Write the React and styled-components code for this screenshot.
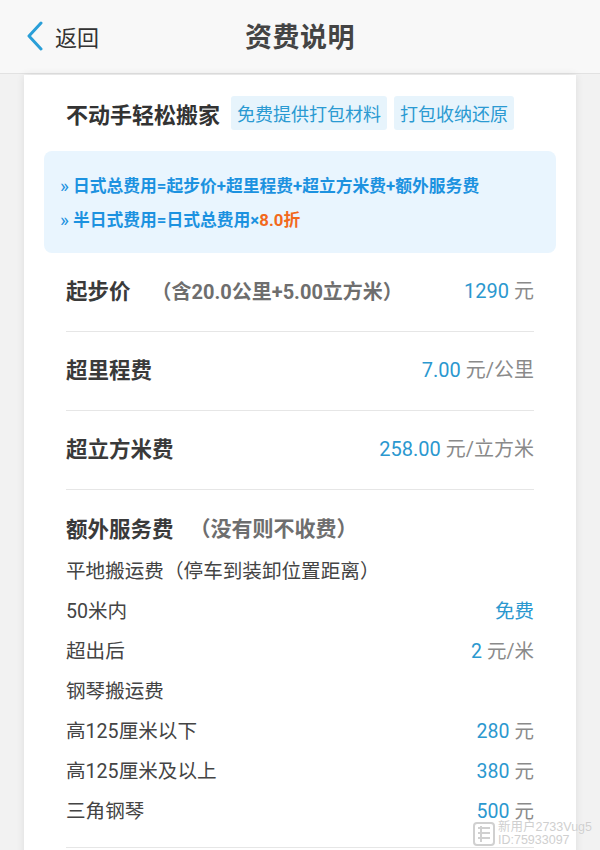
import React from "react";
import styled, { createGlobalStyle } from "styled-components";

const Global = createGlobalStyle`
  html, body { margin: 0; padding: 0; background: #f2f2f2; }
  body { font-family: Roboto, "Noto Sans CJK SC", sans-serif; overflow: hidden; }
  * { box-sizing: border-box; }
`;

const Page = styled.div`
  width: 600px;
  height: 850px;
  position: relative;
  overflow: hidden;
  background: #f2f2f2;
`;

const Header = styled.header`
  height: 74px;
  background: #f8f8f8;
  border-bottom: 1px solid #e2e2e2;
  display: grid;
  grid-template-columns: 1fr auto 1fr;
  align-items: center;
  padding: 0 26px 2px 26px;
`;

const Back = styled.div`
  display: flex;
  align-items: center;
  gap: 11px;
  font-size: 22px;
  color: #333;
`;

const Title = styled.h1`
  margin: 0;
  font-size: 27px;
  font-weight: 700;
  color: #444;
  letter-spacing: 0.5px;
`;

const Card = styled.main`
  margin: 1px 24px 0;
  background: #fff;
  box-shadow: 0 0 8px rgba(0, 0, 0, 0.09);
  padding: 21px 20px 0;
  min-height: 800px;
`;

const TagRow = styled.div`
  display: flex;
  align-items: center;
  padding-left: 22px;
  gap: 7px;
`;

const Lead = styled.span`
  font-size: 22px;
  font-weight: 700;
  color: #333;
  margin-right: 4px;
`;

const Tag = styled.span`
  height: 34px;
  display: flex;
  align-items: center;
  padding: 0 6px;
  background: #e7f4fc;
  border-radius: 3px;
  color: #2b9ad2;
  font-size: 18px;
`;

const Info = styled.div`
  margin-top: 21px;
  background: #e9f5fe;
  border-radius: 8px;
  padding: 17px 16px;
`;

const InfoLine = styled.div`
  height: 34px;
  display: flex;
  align-items: center;
  font-size: 16.8px;
  font-weight: 700;
  color: #1c92e0;
`;

const Arrow = styled.span`
  font-size: 19px;
  margin-right: 4px;
  font-weight: 400;
`;

const Orange = styled.span`
  color: #f2691c;
`;

const Rows = styled.div`
  padding: 0 22px;
`;

const FeeRow = styled.div`
  height: 79px;
  padding-bottom: 5px;
  display: flex;
  align-items: center;
  justify-content: space-between;
  border-bottom: 1px solid #e6e6e6;
`;

const FeeName = styled.span`
  font-size: 21.5px;
  font-weight: 700;
  color: #3a3a3a;
`;

const Note = styled.span`
  font-size: ${(p) => (p.$wide ? 21 : 20)}px;
  font-weight: 700;
  color: #6e6e6e;
  margin-left: ${(p) => (p.$wide ? 16 : 21)}px;
`;

const Value = styled.span`
  font-size: ${(p) => (p.$small ? 19.5 : 20)}px;
  color: #8a8a8a;
`;

const Num = styled.span`
  color: #2b98cf;
  margin-right: 5px;
`;

const Extra = styled.section`
  padding-top: 15px;
  padding-bottom: 18px;
  border-bottom: 1px solid #e6e6e6;
`;

const ExtraTitle = styled.div`
  height: 44px;
  display: flex;
  align-items: center;
`;

const Item = styled.div`
  height: 40px;
  display: flex;
  align-items: center;
  justify-content: space-between;
  font-size: 19.6px;
  color: #444;
`;

const Watermark = styled.div`
  position: absolute;
  right: 8px;
  bottom: 3px;
  display: flex;
  align-items: center;
  gap: 3px;
  color: #cfcfcf;
  text-shadow: 0 0 1px #fff;
`;

const WmText = styled.div`
  display: flex;
  flex-direction: column;
  font-size: 12.5px;
  line-height: 13px;
  font-family: "Liberation Sans", "Noto Sans CJK SC", sans-serif;
`;

const extras = [
  ["平地搬运费（停车到装卸位置距离）", null],
  ["50米内", <Num key="f" style={{ marginRight: 0 }}>免费</Num>],
  ["超出后", [<Num key="n">2</Num>, "元/米"]],
  ["钢琴搬运费", null],
  ["高125厘米以下", [<Num key="n">280</Num>, "元"]],
  ["高125厘米及以上", [<Num key="n">380</Num>, "元"]],
  ["三角钢琴", [<Num key="n">500</Num>, "元"]],
];

export default function App() {
  return (
    <Page>
      <Global />
      <Header>
        <Back>
          <svg width="18" height="30" viewBox="0 0 18 30">
            <path d="M15 2 L3 15 L15 28" fill="none" stroke="#2a9fd8" strokeWidth="3" strokeLinecap="round" strokeLinejoin="round" />
          </svg>
          返回
        </Back>
        <Title>资费说明</Title>
        <div />
      </Header>
      <Card>
        <TagRow>
          <Lead>不动手轻松搬家</Lead>
          <Tag>免费提供打包材料</Tag>
          <Tag>打包收纳还原</Tag>
        </TagRow>
        <Info>
          <InfoLine>
            <Arrow>»</Arrow>日式总费用=起步价+超里程费+超立方米费+额外服务费
          </InfoLine>
          <InfoLine>
            <Arrow>»</Arrow>半日式费用=日式总费用×<Orange>8.0折</Orange>
          </InfoLine>
        </Info>
        <Rows>
          <FeeRow>
            <span>
              <FeeName>起步价</FeeName>
              <Note>（含20.0公里+5.00立方米）</Note>
            </span>
            <Value><Num>1290</Num>元</Value>
          </FeeRow>
          <FeeRow>
            <FeeName>超里程费</FeeName>
            <Value><Num>7.00</Num>元/公里</Value>
          </FeeRow>
          <FeeRow>
            <FeeName>超立方米费</FeeName>
            <Value><Num>258.00</Num>元/立方米</Value>
          </FeeRow>
          <Extra>
            <ExtraTitle>
              <FeeName>额外服务费</FeeName>
              <Note $wide>（没有则不收费）</Note>
            </ExtraTitle>
            {extras.map(([label, val]) => (
              <Item key={label}>
                <span>{label}</span>
                {val && <Value $small>{val}</Value>}
              </Item>
            ))}
          </Extra>
        </Rows>
      </Card>
      <Watermark>
        <svg width="22" height="24" viewBox="0 0 22 24">
          <rect x="1" y="1" width="20" height="22" rx="3" fill="none" stroke="#d0d0d0" strokeWidth="2" />
          <path d="M5 6 H17 M5 11 H17 M5 16 H17 M8 4 V20" stroke="#d0d0d0" strokeWidth="2" />
        </svg>
        <WmText>
          <span>新用户2733Vug5</span>
          <span>ID:75933097</span>
        </WmText>
      </Watermark>
    </Page>
  );
}
